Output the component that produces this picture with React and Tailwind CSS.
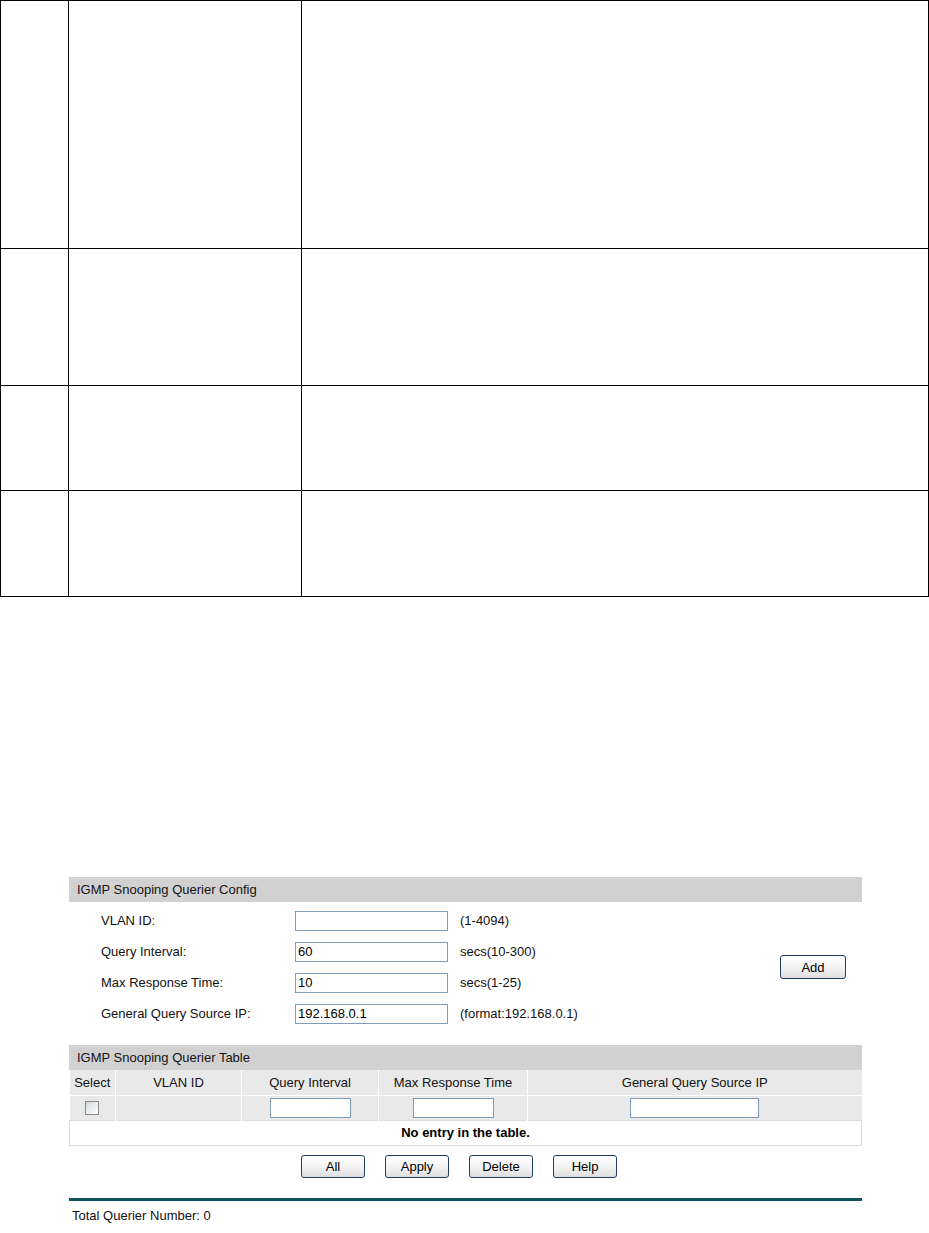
import React from 'react';

const Btn = ({ label, className = '' }) => (
    <button
        type="button"
        className={`h-[23px] w-[64px] rounded-[3px] border border-[#1f3d6b] bg-linear-to-b from-white via-[#f4f4f4] to-[#dedede] text-[13px] text-black leading-none ${className}`}
    >
        {label}
    </button>
);

const Field = ({ label, value, hint }) => (
    <div className="flex h-[31px] items-center">
        <span className="w-[194px] text-[13px] text-[#111]">{label}</span>
        <input
            readOnly
            value={value}
            className="h-[20px] w-[153px] border border-[#7f9db9] bg-white px-[2px] text-[13px] text-black outline-none"
        />
        <span className="ml-[12px] text-[13px] text-[#111]">{hint}</span>
    </div>
);

const App = () => {
    const rows = [248, 137, 105, 106];

    return (
        <div className="min-h-[1233px] bg-white font-['Liberation_Sans',Arial,sans-serif]">
            {/* top blank table */}
            <table className="w-[929px] table-fixed border-collapse">
                <colgroup>
                    <col className="w-[68px]" />
                    <col className="w-[233px]" />
                    <col />
                </colgroup>
                <tbody>
                    {rows.map((h, i) => (
                        <tr key={i} style={{ height: h }}>
                            <td className="border border-black"></td>
                            <td className="border border-black"></td>
                            <td className="border border-black"></td>
                        </tr>
                    ))}
                </tbody>
            </table>

            <div className="ml-[69px] mt-[280px] w-[793px]">
                {/* config */}
                <div className="h-[25px] bg-[#d1d1d1] pl-[8px] text-[13px] leading-[25px] text-[#111]">
                    IGMP Snooping Querier Config
                </div>
                <div className="flex items-center justify-between pl-[32px] pr-[16px] pt-[3px] pb-[16px]">
                    <div>
                        <Field label=" VLAN ID:" value="" hint="(1-4094)" />
                        <Field label="Query Interval:" value="60" hint="secs(10-300)" />
                        <Field label="Max Response Time:" value="10" hint="secs(1-25)" />
                        <Field label="General Query Source IP:" value="192.168.0.1" hint="(format:192.168.0.1)" />
                    </div>
                    <Btn label="Add" className="h-[24px] w-[66px]" />
                </div>

                {/* table */}
                <div className="h-[25px] bg-[#d1d1d1] pl-[8px] text-[13px] leading-[25px] text-[#111]">
                    IGMP Snooping Querier Table
                </div>
                <table className="w-[793px] table-fixed border-collapse text-[13px] text-[#111]">
                    <colgroup>
                        <col className="w-[46px]" />
                        <col className="w-[126px]" />
                        <col className="w-[137px]" />
                        <col className="w-[149px]" />
                        <col />
                    </colgroup>
                    <tbody>
                        <tr className="h-[25px] bg-[#e9e9e9]">
                            <td className="border-r border-b border-white text-center">Select</td>
                            <td className="border-r border-b border-white text-center">VLAN ID</td>
                            <td className="border-r border-b border-white text-center">Query Interval</td>
                            <td className="border-r border-b border-white text-center">Max Response Time</td>
                            <td className="border-b border-white text-center">General Query Source IP</td>
                        </tr>
                        <tr className="h-[25px] bg-[#e9e9e9]">
                            <td className="border-r border-white">
                                <div className="mx-auto h-[14px] w-[14px] border border-[#878787] bg-linear-to-br from-[#d6dbe2] to-white"></div>
                            </td>
                            <td className="border-r border-white"></td>
                            <td className="border-r border-white text-center">
                                <input readOnly className="h-[20px] w-[81px] border border-[#7f9db9] bg-white outline-none" />
                            </td>
                            <td className="border-r border-white text-center">
                                <input readOnly className="h-[20px] w-[81px] border border-[#7f9db9] bg-white outline-none" />
                            </td>
                            <td className="text-center">
                                <input readOnly className="h-[20px] w-[129px] border border-[#7f9db9] bg-white outline-none" />
                            </td>
                        </tr>
                        <tr className="h-[25px] bg-white">
                            <td colSpan={5} className="border border-[#dcdcdc] text-center font-bold text-black">
                                No entry in the table.
                            </td>
                        </tr>
                    </tbody>
                </table>

                <div className="flex gap-[20px] pl-[232px] pt-[9px]">
                    <Btn label="All" />
                    <Btn label="Apply" />
                    <Btn label="Delete" />
                    <Btn label="Help" />
                </div>

                <div className="mt-[20px] h-[3px] bg-[#0b5460]"></div>
                <div className="pl-[3px] pt-[5px] text-[13px] text-[#111]">Total Querier Number: 0</div>
            </div>
        </div>
    );
};

export default App;
